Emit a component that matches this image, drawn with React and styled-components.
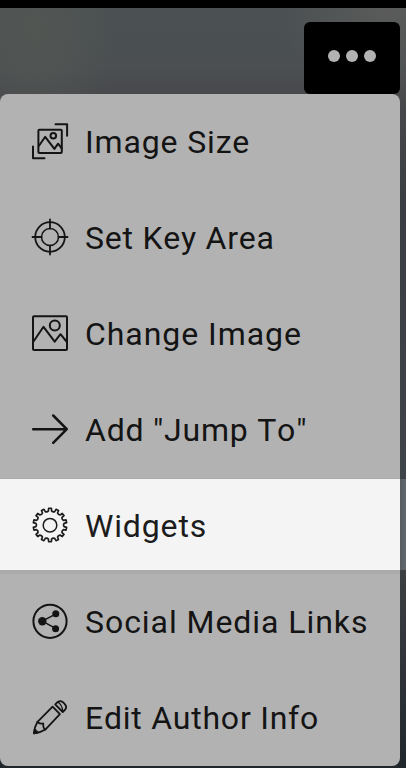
import React from 'react';
import styled, { createGlobalStyle } from 'styled-components';

const GlobalStyle = createGlobalStyle`
  body {
    margin: 0;
    background-color: #000;
  }
`;

const TEETH = 14;

// outline of the cog: each tooth is a rounded bump between two radii
const cogPath = () => {
  const step = (Math.PI * 2) / TEETH;
  const point = (radius, angle) =>
    `${(18 + radius * Math.sin(angle)).toFixed(2)} ${(18 - radius * Math.cos(angle)).toFixed(2)}`;
  let d = '';
  for (let i = 0; i < TEETH; i++) {
    const a = i * step;
    d += `${i === 0 ? 'M' : 'L'}${point(14.2, a - step * 0.25)}`;
    d += `L${point(16.8, a - step * 0.18)}L${point(16.8, a + step * 0.18)}L${point(14.2, a + step * 0.25)}`;
    d += `Q${point(13, a + step * 0.5)} ${point(14.2, a + step * 0.75)}`;
  }
  return `${d}Z`;
};

const ImageSizeIcon = () => (
  <Icon viewBox="0 0 36 36">
    <rect x="6.4" y="6.8" width="23.4" height="23.2" rx="1" />
    <path d="M7 22.8l6.2-9 9.2 12.1 3.7-5.2 3.6 4.7" />
    <circle cx="21.3" cy="12.8" r="2.8" />
    <path d="M23.5 1.2h11.6v11.5M1 23.5V35.2h11.5" />
  </Icon>
);

const TargetIcon = () => (
  <Icon viewBox="0 0 36 36" $stroke={1.8}>
    <circle cx="18" cy="18" r="14.8" />
    <circle cx="18" cy="18" r="8.5" strokeWidth="1.5" />
    <path d="M18 .5v9M18 26.5v9M.5 18h9M26.5 18h9" />
  </Icon>
);

const PictureIcon = () => (
  <Icon viewBox="0 0 36 36">
    <rect x="1" y="1.2" width="34" height="33.8" rx="1" />
    <path d="M1.5 26.5L11.5 11.8l11.2 14.8 5.8-7.4 6 7.3" />
    <circle cx="22.8" cy="10.6" r="5" />
  </Icon>
);

const ArrowIcon = () => (
  <Icon viewBox="0 0 36 36" $stroke={2.5}>
    <path d="M1.2 18.2h33.3M21.2 4.5L34.8 18.2 21.2 31.8" />
  </Icon>
);

const CogIcon = () => (
  <Icon viewBox="0 0 36 36" $stroke={1.7}>
    <path d={cogPath()} />
    <circle cx="18" cy="18.2" r="6.8" strokeWidth="1.5" />
  </Icon>
);

const ShareIcon = () => (
  <Icon viewBox="0 0 36 36">
    <circle cx="18" cy="18.3" r="16.6" />
    <path d="M24 10.8L10.3 18.2 24 25.6" strokeWidth="1.4" />
    <circle cx="10.3" cy="18.2" r="4.2" fill="currentColor" stroke="none" />
    <circle cx="23.8" cy="10.8" r="3.5" fill="currentColor" stroke="none" />
    <circle cx="23.6" cy="25.7" r="3.5" fill="currentColor" stroke="none" />
  </Icon>
);

const PencilIcon = () => (
  <Icon viewBox="0 0 36 36" $stroke={1.8}>
    <path d="M2 34.3Q2.4 28 5.5 22.8L20.6 7.7l7.3 7.5L13.3 30.6Q8.5 33.8 2 34.3z" />
    <path d="M5.5 22.8Q7 25.2 11.2 24.4Q11 29.2 13.3 30.6" />
    <path d="M23.2 5.3l2.6-2.4c2.2-1.4 4.6-.5 6.4 1.4s2.6 4.4 1 6.2l-2.5 2.5z" />
    <path d="M25.8 3Q30 5.6 30.6 11.6" strokeWidth="1.2" />
    <path d="M2 34.3l.7-3.8 3 3z" fill="currentColor" />
  </Icon>
);

const items = [
  { label: 'Image Size', icon: <ImageSizeIcon /> },
  { label: 'Set Key Area', icon: <TargetIcon />, tracking: 0.76 },
  { label: 'Change Image', icon: <PictureIcon />, tracking: 0.95 },
  { label: 'Add "Jump To"', icon: <ArrowIcon />, tracking: 0.78 },
  { label: 'Widgets', icon: <CogIcon />, active: true },
  { label: 'Social Media Links', icon: <ShareIcon />, tracking: 0.95 },
  { label: 'Edit Author Info', icon: <PencilIcon />, tracking: 0.76 },
];

const App = () => {
  return (
    <>
      <GlobalStyle />
      <Page>
        <Toolbar>
          <MoreButton type="button" aria-label="More options">
            <Dot />
            <Dot />
            <Dot />
          </MoreButton>
        </Toolbar>
        <Menu>
          {items.map(({ label, icon, active, tracking }) => (
            <MenuItem key={label} $active={active}>
              {icon}
              <Label $tracking={tracking}>{label}</Label>
            </MenuItem>
          ))}
        </Menu>
      </Page>
    </>
  );
};

const Page = styled.div`
  box-sizing: border-box;
  width: 406px;
  height: 768px;
  overflow: hidden;
  border-top: 8px solid #000;
  background:
    radial-gradient(ellipse 110px 100px at 390px 0, #5a5b5a, transparent),
    radial-gradient(ellipse 80px 130px at 35px 20px, #525653, transparent),
    linear-gradient(180deg, #4b5052 0, #4b4f51 60px, #48494c 86px, #3a3e42 200px, #3f4448 470px, #3c4043 560px, #2b3036 690px, #20262c 760px);
`;

const Toolbar = styled.div`
  display: flex;
  justify-content: flex-end;
  padding: 14px 6px 0 0;
`;

const MoreButton = styled.button`
  display: flex;
  align-items: center;
  justify-content: center;
  gap: 6px;
  width: 96px;
  height: 72px;
  padding: 0 0 4px;
  border: none;
  border-radius: 6px;
  background-color: #000;
`;

const Dot = styled.span`
  width: 12px;
  height: 12px;
  border-radius: 50%;
  background-color: #b2b2b2;
`;

const Menu = styled.ul`
  width: 400px;
  margin: 0;
  padding: 0;
  border-radius: 8px;
  background-color: #b2b2b2;
  list-style: none;
`;

const MenuItem = styled.li`
  position: relative;
  box-sizing: border-box;
  display: flex;
  align-items: center;
  gap: 17px;
  height: 96px;
  padding-left: 32px;
  color: ${({ $active }) => ($active ? '#1c1c1c' : '#141414')};
  background: ${({ $active }) =>
    $active ? 'linear-gradient(#ababab 1px, #f4f4f4 1px, #f4f4f4 92px, #ababab 92px)' : 'none'};

  /* the highlight runs past the menu to the edge of the screen */
  &::after {
    content: '';
    display: ${({ $active }) => ($active ? 'block' : 'none')};
    position: absolute;
    top: 1px;
    left: 400px;
    width: 6px;
    height: 91px;
    background: linear-gradient(90deg, #585d61, #63686c);
  }
`;

const Icon = styled.svg`
  flex: none;
  width: 36px;
  height: 36px;
  margin-bottom: 2px;
  overflow: visible;
  fill: none;
  stroke: currentColor;
  stroke-width: ${({ $stroke = 2 }) => $stroke};
  stroke-linecap: round;
  stroke-linejoin: round;
`;

const Label = styled.span`
  font-family: Roboto, sans-serif;
  font-size: 32px;
  font-kerning: none;
  line-height: 40px;
  letter-spacing: ${({ $tracking = 0.85 }) => $tracking}px;
  white-space: nowrap;
`;

export default App;
